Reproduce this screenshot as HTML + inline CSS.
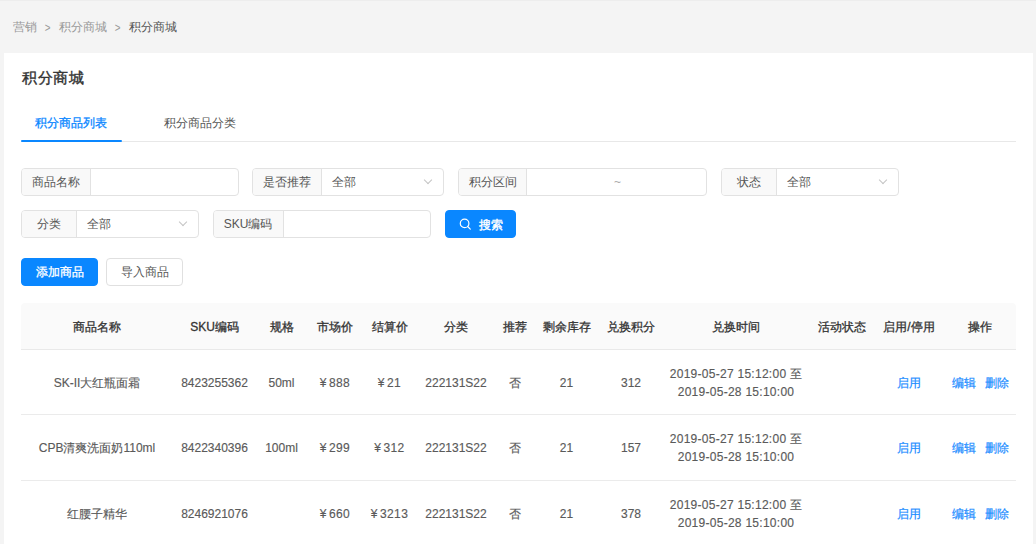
<!DOCTYPE html>
<html><head><meta charset="utf-8">
<style>
*{box-sizing:border-box;margin:0;padding:0}
html,body{width:1036px;height:544px;overflow:hidden}
body{background:#f4f4f4;font-family:"Liberation Sans",sans-serif;font-size:12px;color:#606266;position:relative}
.topline{position:absolute;left:0;top:0;width:1036px;height:1px;background:#ededed}
.abs{position:absolute;white-space:nowrap}
.bc{left:13px;top:19px;line-height:16px;color:#999}
.bc .sep{margin:0 8px 0 7px;display:inline-block;transform:translateY(0.5px) scale(0.82,1.1)}
.bc .last{color:#555}
.card{position:absolute;left:4px;top:53px;width:1029px;height:600px;background:#fff}
.title{left:18px;top:15px;font-size:15px;letter-spacing:0.6px;color:#333;line-height:20px;-webkit-text-stroke:0.4px #333}
.tabs{position:absolute;left:17px;top:88px;width:995px;height:1px;background:#e8e8e8}
.tab{top:62px;line-height:16px;color:#555}
.tab.on{color:#0a87ff;-webkit-text-stroke:0.3px #0a87ff}
.ink{position:absolute;left:17px;top:87px;width:101px;height:2px;background:#0a87ff;border-radius:1px}
.grp{position:absolute;height:28px;border:1px solid #e2e2e2;border-radius:4px;background:#fff}
.grp .ad{position:absolute;left:0;top:0;bottom:0;background:#f9f9f9;border-right:1px solid #e2e2e2;border-radius:3px 0 0 3px;text-align:center;line-height:26px;color:#555}
.grp .val{position:absolute;top:0;line-height:26px;color:#555}
.grp .arr{position:absolute;top:8px;width:6px;height:6px;border-right:1px solid #c4c4c4;border-bottom:1px solid #c4c4c4;transform:rotate(45deg)}
.btn{position:absolute;height:28px;border-radius:4px;text-align:center;line-height:26px}
.btn.pri{background:#0a87ff;color:#fff;border:1px solid #0a87ff}
.btn.def{background:#fff;color:#555;border:1px solid #e0e0e0}
table{position:absolute;left:17px;top:250px;border-collapse:collapse;table-layout:fixed;width:995px}
th{background:#fafafa;height:46px;font-weight:normal;color:#333;-webkit-text-stroke:0.3px #333;border-bottom:1px solid #e9e9e9;text-align:center;padding:4px 0 0}
td{height:65px;border-bottom:1px solid #ebebeb;text-align:center;color:#5a5a5a;padding:2px 0 0;line-height:18px;-webkit-text-stroke:0.15px #5a5a5a}
th:first-child{border-top-left-radius:4px}
th:last-child{border-top-right-radius:4px}
.lk{color:#1a8cff;-webkit-text-stroke:0.2px #1a8cff}
.y{margin-right:2.5px}
.n{letter-spacing:0.4px}
.tm{letter-spacing:0.27px;padding-top:2px}
</style></head><body><div class="topline"></div>
<div class="abs bc">营销<span class="sep">&gt;</span>积分商城<span class="sep">&gt;</span><span class="last">积分商城</span></div>
<div class="card">
  <div class="abs title">积分商城</div>
  <div class="abs tab on" style="left:31px">积分商品列表</div>
  <div class="abs tab" style="left:160px">积分商品分类</div>
  <div class="tabs"></div>
  <div class="ink"></div>

  <div class="grp" style="left:17px;top:115px;width:218px"><div class="ad" style="width:69px">商品名称</div></div>
  <div class="grp" style="left:248px;top:115px;width:192px"><div class="ad" style="width:69px">是否推荐</div><div class="val" style="left:79px">全部</div><div class="arr" style="left:172px"></div></div>
  <div class="grp" style="left:454px;top:115px;width:249px"><div class="ad" style="width:68px">积分区间</div><div class="val" style="left:155px;color:#aaa">~</div></div>
  <div class="grp" style="left:717px;top:115px;width:178px"><div class="ad" style="width:55px">状态</div><div class="val" style="left:65px">全部</div><div class="arr" style="left:158px"></div></div>

  <div class="grp" style="left:17px;top:157px;width:178px"><div class="ad" style="width:55px">分类</div><div class="val" style="left:65px">全部</div><div class="arr" style="left:158px"></div></div>
  <div class="grp" style="left:209px;top:157px;width:218px"><div class="ad" style="width:70px;padding-right:1px">SKU编码</div></div>
  <div class="btn pri" style="left:441px;top:157px;width:71px;height:28px"><svg style="position:absolute;left:13px;top:6px" width="14" height="14" viewBox="0 0 14 14"><circle cx="5.6" cy="6.4" r="4.3" fill="none" stroke="#fff" stroke-width="1.2"/><line x1="8.7" y1="9.5" x2="11.3" y2="12.1" stroke="#fff" stroke-width="1.2" stroke-linecap="round"/></svg><span style="position:absolute;left:33px;top:1px;-webkit-text-stroke:0.4px #fff">搜索</span></div>

  <div class="btn pri" style="left:17px;top:205px;width:77px;line-height:27px;-webkit-text-stroke:0.3px #fff">添加商品</div>
  <div class="btn def" style="left:102px;top:205px;width:77px;line-height:27px">导入商品</div>

  <table>
    <colgroup><col style="width:152px"><col style="width:83px"><col style="width:51px"><col style="width:56px"><col style="width:53px"><col style="width:80px"><col style="width:38px"><col style="width:65px"><col style="width:64px"><col style="width:146px"><col style="width:65px"><col style="width:70px"><col style="width:72px"></colgroup>
    <tr><th>商品名称</th><th>SKU编码</th><th>规格</th><th>市场价</th><th>结算价</th><th>分类</th><th>推荐</th><th>剩余库存</th><th>兑换积分</th><th>兑换时间</th><th>活动状态</th><th>启用/停用</th><th>操作</th></tr>
    <tr><td>SK-II大红瓶面霜</td><td>8423255362</td><td>50ml</td><td><span class="y">¥</span><span class="n">888</span></td><td><span class="y">¥</span><span class="n">21</span></td><td>222131S22</td><td>否</td><td>21</td><td>312</td><td class="tm">2019-05-27 15:12:00 至<br>2019-05-28 15:10:00</td><td></td><td class="lk">启用</td><td class="lk">编辑<span style="margin-left:9px">删除</span></td></tr>
    <tr><td style="height:66px">CPB清爽洗面奶110ml</td><td>8422340396</td><td>100ml</td><td><span class="y">¥</span><span class="n">299</span></td><td><span class="y">¥</span><span class="n">312</span></td><td>222131S22</td><td>否</td><td>21</td><td>157</td><td class="tm">2019-05-27 15:12:00 至<br>2019-05-28 15:10:00</td><td></td><td class="lk">启用</td><td class="lk">编辑<span style="margin-left:9px">删除</span></td></tr>
    <tr><td>红腰子精华</td><td>8246921076</td><td></td><td><span class="y">¥</span><span class="n">660</span></td><td><span class="y">¥</span><span class="n">3213</span></td><td>222131S22</td><td>否</td><td>21</td><td>378</td><td class="tm">2019-05-27 15:12:00 至<br>2019-05-28 15:10:00</td><td></td><td class="lk">启用</td><td class="lk">编辑<span style="margin-left:9px">删除</span></td></tr>
  </table>
</div>
</body></html>
